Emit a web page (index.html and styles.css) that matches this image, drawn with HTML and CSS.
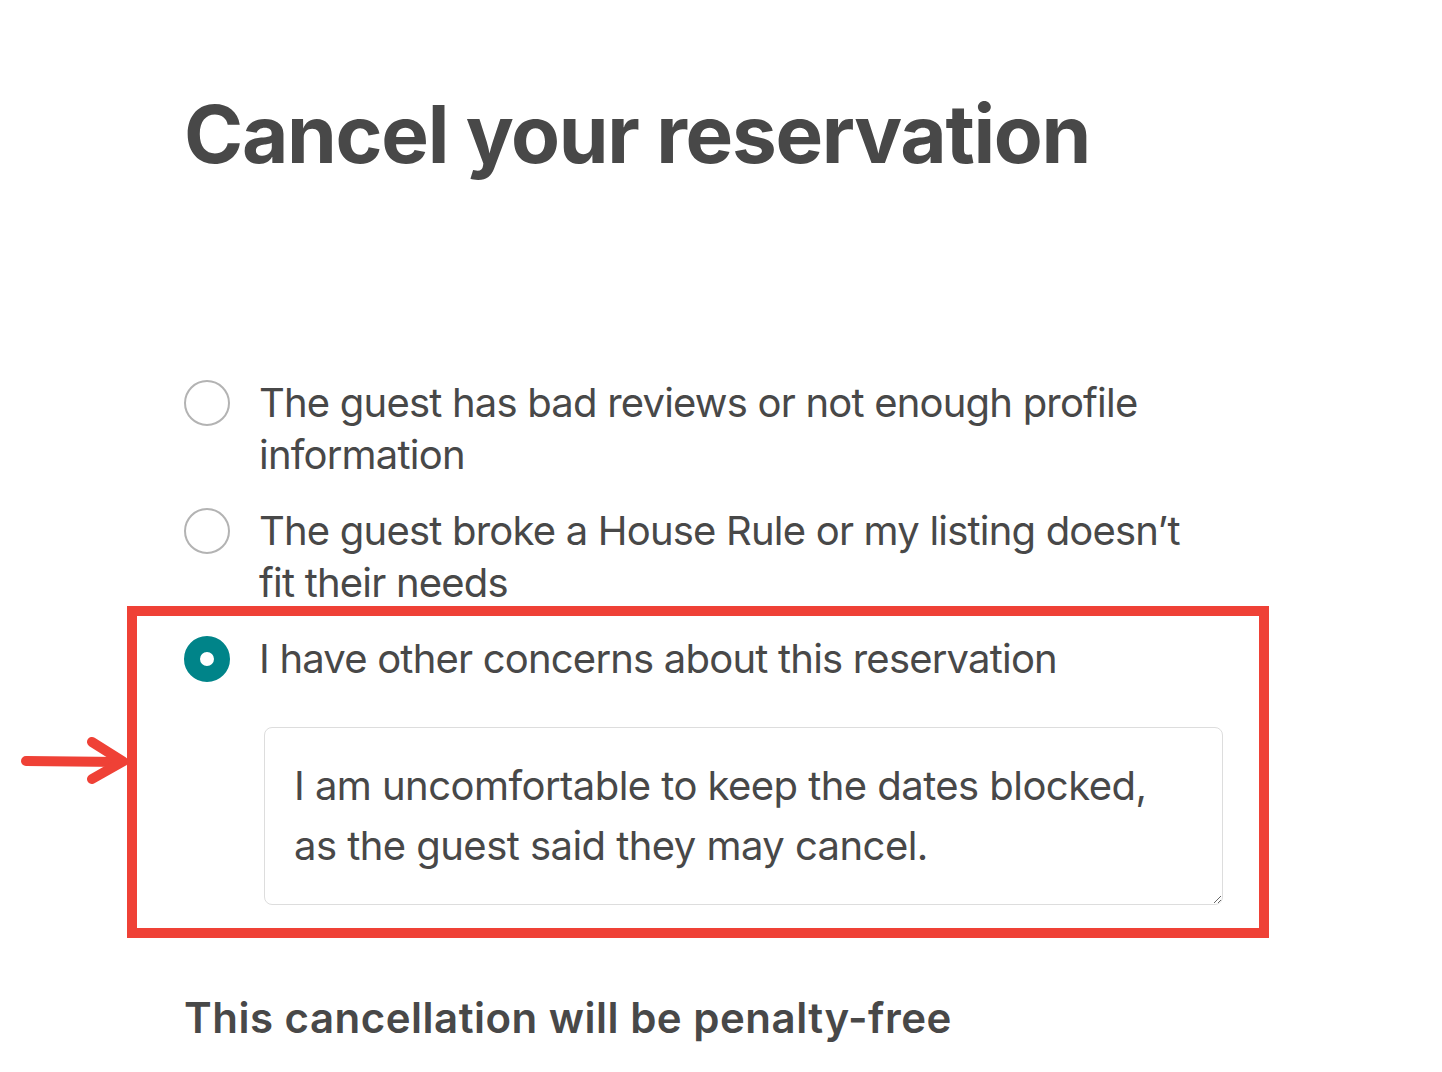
FILE: index.html
```html
<!DOCTYPE html>
<html lang="en">
<head>
<meta charset="utf-8">
<title>Cancel your reservation</title>
<link rel="stylesheet" href="styles.css">
</head>
<body>
<main class="page">
  <h1 class="title">Cancel your reservation</h1>

  <div class="options">
    <label class="option">
      <span class="radio"></span>
      <span class="option-text">The guest has bad reviews or not enough profile information</span>
    </label>

    <label class="option">
      <span class="radio"></span>
      <span class="option-text">The guest broke a House Rule or my listing doesn’t fit their needs</span>
    </label>

    <div class="option-other">
      <label class="option">
        <span class="radio radio-checked"></span>
        <span class="option-text">I have other concerns about this reservation</span>
      </label>
      <textarea class="reason">I am uncomfortable to keep the dates blocked, as the guest said they may cancel.</textarea>

      <span class="highlight-box"></span>
      <svg class="highlight-arrow" width="120" height="50" viewBox="0 0 120 50" aria-hidden="true">
        <path d="M14 27 L108 28" stroke="#ef4136" stroke-width="10" stroke-linecap="round" fill="none"/>
        <path d="M80 8 L111 27.5 L80 45" stroke="#ef4136" stroke-width="10" stroke-linecap="round" stroke-linejoin="round" fill="none"/>
      </svg>
    </div>
  </div>

  <h2 class="subtitle">This cancellation will be penalty-free</h2>
</main>
</body>
</html>
```

FILE: styles.css
```css
html, body {
  margin: 0;
  padding: 0;
  background: #ffffff;
}

body {
  font-family: Inter, "Noto Sans", sans-serif;
  color: #484848;
}

.page {
  padding: 86px 0 0 184px;
}

.title {
  margin: 0;
  font-size: 80px;
  line-height: 96px;
  font-weight: 700;
  letter-spacing: -1.3px;
}

.options {
  margin-top: 195px;
  display: flex;
  flex-direction: column;
  gap: 24px;
}

.option {
  display: flex;
  align-items: flex-start;
  gap: 29px;
}

.radio {
  flex: none;
  box-sizing: border-box;
  width: 46px;
  height: 46px;
  margin-top: 3px;
  border-radius: 50%;
  border: 2px solid #b3b3b3;
  background: #fff;
}

.radio-checked {
  border: 16px solid #008489;
  background: #fff;
}

.option-text {
  font-size: 40px;
  line-height: 52px;
  width: 940px;
  letter-spacing: -0.8px;
}

.option-other {
  position: relative;
}

.reason {
  display: block;
  box-sizing: border-box;
  margin: 42px 0 0 80px;
  width: 959px;
  height: 178px;
  padding: 28px 29px;
  border: 1px solid #dddddd;
  border-radius: 8px;
  font-family: Inter, "Noto Sans", sans-serif;
  font-size: 40px;
  line-height: 60px;
  letter-spacing: -0.55px;
  color: #484848;
  background: #fff;
  resize: both;
  outline: none;
}

.highlight-box {
  position: absolute;
  left: -57px;
  top: -27px;
  width: 1142px;
  height: 332px;
  box-sizing: border-box;
  border: 10px solid #ef4136;
  pointer-events: none;
}

.highlight-arrow {
  position: absolute;
  left: -172px;
  top: 101px;
}

.subtitle {
  margin: 87px 0 40px;
  font-size: 42px;
  line-height: 52px;
  font-weight: 600;
  letter-spacing: 0.5px;
}
```
